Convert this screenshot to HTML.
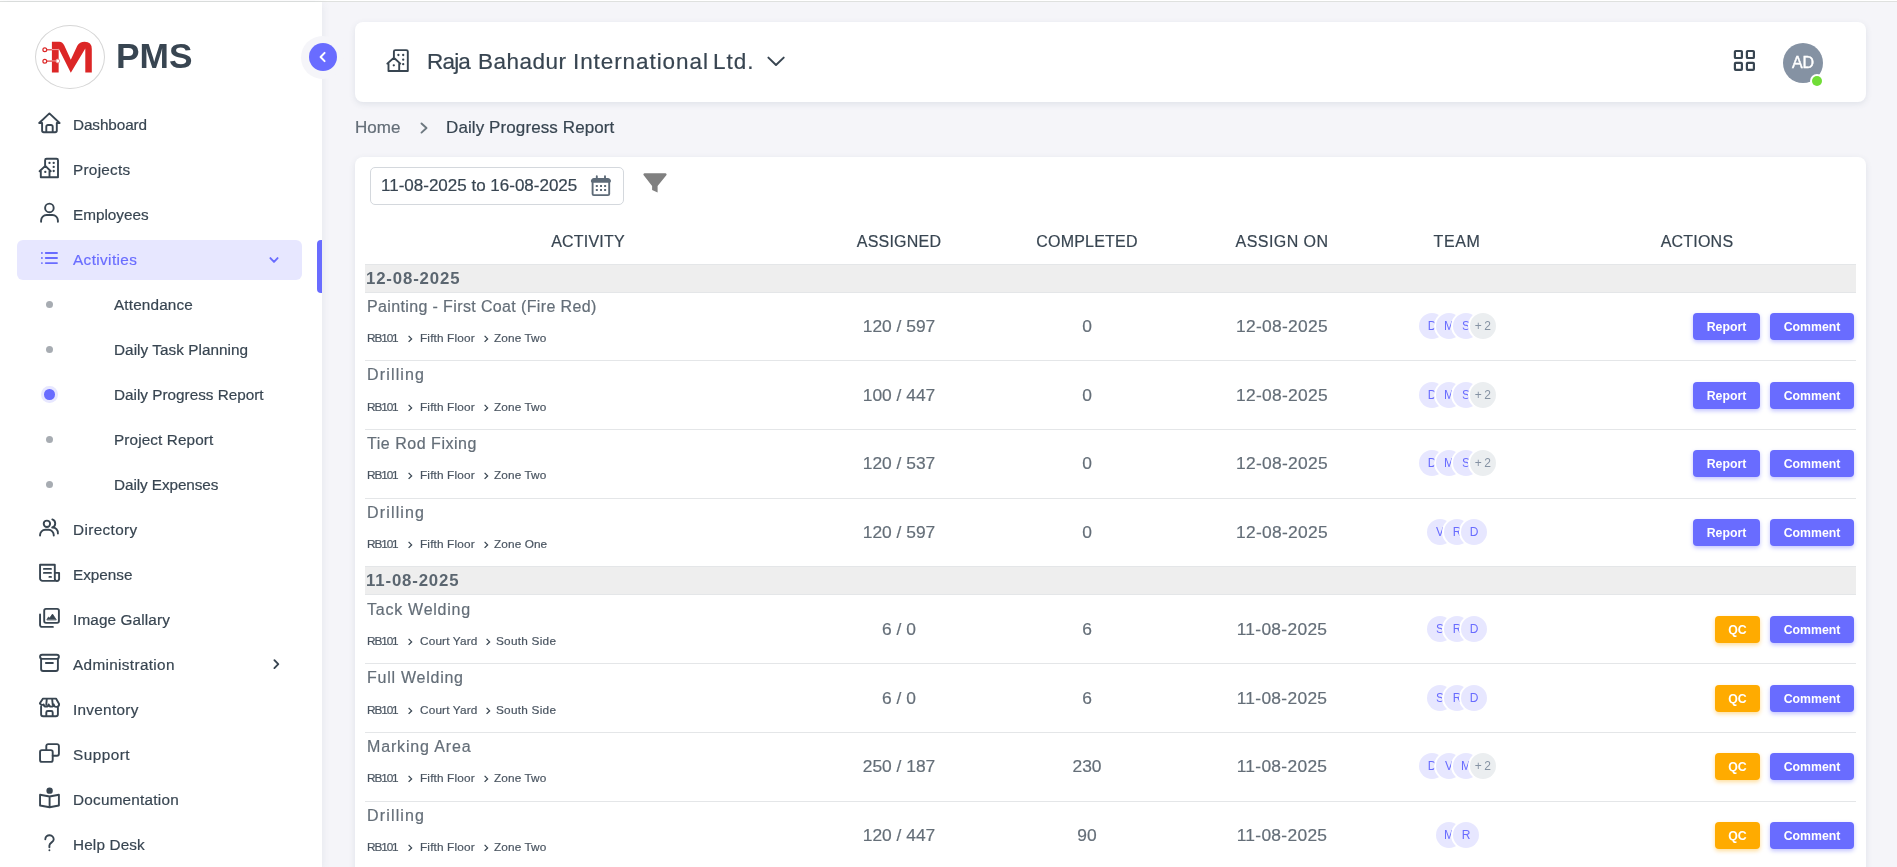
<!DOCTYPE html>
<html><head><meta charset="utf-8">
<style>
*{box-sizing:border-box;margin:0;padding:0}
html,body{width:1897px;height:867px;overflow:hidden}
body{font-family:"Liberation Sans",sans-serif;background:#f5f5f9;position:relative;color:#384551}
.abs{position:absolute}
.t{position:absolute;white-space:nowrap;will-change:transform;-webkit-text-stroke:0.2px currentColor}
#topline{left:0;top:1px;width:1897px;height:1px;background:#dfe1df}
#side{left:0;top:2px;width:322px;height:865px;background:#fff;box-shadow:0 2px 8px 0 rgba(67,89,113,.1)}
.logo{left:35px;top:25px;width:70px;height:64px;border:1px solid #d6d6d6;border-radius:50%;background:#fff}
.pms{left:116px;top:35.5px;font-size:35.3px;line-height:40px;font-weight:700;color:#384551;will-change:transform}
.toggle{left:301px;top:36px;width:43px;height:43px;border-radius:50%;background:#f5f5f9}
.toggle .in{position:absolute;left:8px;top:7px;width:28px;height:28px;border-radius:50%;background:#696cff}
#act{left:17px;top:240px;width:285px;height:40px;background:#e7e7ff;border-radius:6px}
#actbar{left:317px;top:240px;width:5px;height:53px;background:#696cff;border-radius:4px 0 0 4px}
.dot{position:absolute;left:46px;width:7px;height:7px;border-radius:50%;background:#a7acb2}
.card{background:#fff;border-radius:8px;box-shadow:0 2px 6px 0 rgba(67,89,113,.12)}
#hdr{left:355px;top:22px;width:1511px;height:80px}
#main{left:355px;top:157px;width:1511px;height:730px}
.ico{position:absolute;overflow:visible}
.datebox{left:370px;top:167px;width:254px;height:38px;border:1px solid #d4d8dd;border-radius:5px}
.avatar{left:1783px;top:43px;width:40px;height:40px;border-radius:50%;background:#8592a3}
.online{left:1812px;top:76px;width:10px;height:10px;border-radius:50%;background:#71dd37;box-shadow:0 0 0 2px #fff}
.hline{position:absolute;left:365px;width:1491px;height:1px;background:#e4e6e8}
.grp{position:absolute;left:365px;width:1491px;background:#eeeeee;border-top:1px solid #e4e6e8;border-bottom:1px solid #e4e6e8}
.rb{position:absolute;left:365px;width:1491px;height:1px;background:#e4e6e8}
.sub{color:#4a5561}
.chv{display:inline-block;margin:0 7px 0 8px;vertical-align:0px}
.team{position:absolute;height:26px}
.av{position:absolute;top:0;width:26px;height:26px;border-radius:50%;background:#e7e7ff;box-shadow:0 0 0 2px #fff;color:#696cff;font-size:12px;line-height:27.5px;text-align:center;will-change:transform}
.av.more{background:#ebeef0;color:#8592a3;letter-spacing:2.5px;text-indent:2px}
.btn{position:absolute;height:27px;border-radius:4px;color:#fff;font-size:12.3px;font-weight:700;line-height:29px;text-align:center;will-change:transform}
.bp{background:#696cff;box-shadow:0 2px 4px rgba(105,108,255,.4)}
.bw{background:#ffab00;box-shadow:0 2px 4px rgba(255,171,0,.4)}

</style></head><body>
<div class="abs" style="left:0;top:0;width:1897px;height:1px;background:#fff"></div>
<div id="topline" class="abs"></div>
<div id="side" class="abs"></div>
<div class="abs logo"></div>
<svg class="ico" style="left:35px;top:25px" width="70" height="64" viewBox="0 0 70 64">
<path d="M16.9 47.6 V16.8 H24.4 Q27.6 16.8 29.3 20.6 L35.8 34.7 L42.3 20.7 Q44.6 16.8 49.6 16.8 Q56.8 16.8 56.8 24 V47.6 H50.3 V23.6 L35.8 47.8 L23.65 23.4 V47.6 Z" fill="#dc2626"/>
<path d="M11.6 24.8 H16.9" stroke="#dc2626" stroke-width="1.1"/>
<path d="M16.9 24.6 H23.6" stroke="#f4b4b4" stroke-width="0.9"/>
<path d="M11.6 36.1 H16.9" stroke="#dc2626" stroke-width="1.1"/>
<path d="M16.9 35.9 H21" stroke="#f4b4b4" stroke-width="0.9"/>
<circle cx="9.8" cy="24.8" r="1.9" fill="#fff" stroke="#dc2626" stroke-width="1.2"/>
<circle cx="9.8" cy="36.2" r="1.9" fill="#fff" stroke="#dc2626" stroke-width="1.2"/>
<circle cx="22.8" cy="36" r="1.9" fill="#fff" stroke="#e98a8a" stroke-width="0.9"/>
</svg>
<div class="abs pms">PMS</div>
<div class="abs toggle"><div class="in"></div></div>
<svg class="ico" style="left:317px;top:51px" width="12" height="12" viewBox="0 0 12 12"><path d="M7.6 1.9 L3.6 6 L7.6 10.1" fill="none" stroke="#fff" stroke-width="2" stroke-linecap="round" stroke-linejoin="round"/></svg>
<div id="act" class="abs"></div>
<div id="actbar" class="abs"></div>
<div class="dot" style="top:301px"></div>
<div class="dot" style="top:346px"></div>
<div class="dot" style="background:#696cff;box-shadow:0 0 0 3px #e7e7ff;width:10.5px;height:10.5px;left:44.15px;top:389.15px"></div>
<div class="dot" style="top:436px"></div>
<div class="dot" style="top:481px"></div>
<div id="hdr" class="abs card"></div>
<div id="main" class="abs card"></div>
<div class="abs datebox"></div>
<div class="abs avatar"></div>
<div class="abs online"></div>
<div class="hline" style="top:264px"></div>
<svg class="ico" style="left:34px;top:108px" width="32" height="30" viewBox="0 0 32 30" fill="none" stroke="#384551" stroke-width="1.9" stroke-linecap="round" stroke-linejoin="round"><path d="M8.1 15 H5.2 L15.4 5.4 L25.6 15 H22.8 M8.1 15 V22.5 a1.7 1.7 0 0 0 1.7 1.7 H21.1 a1.7 1.7 0 0 0 1.7 -1.7 V15 M12.3 24.2 V18.7 a1.7 1.7 0 0 1 1.7 -1.7 H17 a1.7 1.7 0 0 1 1.7 1.7 V24.2"/></svg>
<svg class="ico" style="left:34px;top:152px" width="32" height="32" viewBox="0 0 32 32" fill="none" stroke="#384551" stroke-width="1.9" stroke-linecap="round" stroke-linejoin="round"><path d="M11.1 13.7 V8.3 a1.5 1.5 0 0 1 1.5 -1.5 H22.5 a1.5 1.5 0 0 1 1.5 1.5 V25.3 H6.8 V19.2 H5.6 L11.3 13.9 L16.8 19.2 H15.5 V25.3"/><path d="M15.5 10.9 h.01 M19.7 10.9 h.01 M19.7 14.9 h.01 M19.7 19 h.01 M11.3 19.9 h.01" stroke-width="2.3"/></svg>
<svg class="ico" style="left:34px;top:198px" width="32" height="30" viewBox="0 0 32 30" fill="none" stroke="#384551" stroke-width="1.9" stroke-linecap="round" stroke-linejoin="round"><circle cx="15.4" cy="9.9" r="4.3"/><path d="M7.1 23.7 v-1.2 a5.5 5.5 0 0 1 5.5 -5.5 h5.8 a5.5 5.5 0 0 1 5.5 5.5 v1.2"/></svg>
<svg class="ico" style="left:34px;top:245px" width="30" height="30" viewBox="0 0 30 30" fill="none" stroke="#696cff" stroke-width="1.9" stroke-linecap="round"><path d="M7.9 8 h.01 M7.9 13 h.01 M7.9 18.1 h.01 M11.8 8 H23 M11.8 13 H23 M11.8 18.1 H23"/></svg>
<svg class="ico" style="left:34px;top:512px" width="32" height="30" viewBox="0 0 32 30" fill="none" stroke="#384551" stroke-width="1.9" stroke-linecap="round" stroke-linejoin="round"><circle cx="12.9" cy="11.8" r="3.2"/><path d="M6.05 23.5 v-0.5 a5.2 5.2 0 0 1 5.2 -5.2 h3.3 a5.2 5.2 0 0 1 5.2 5.2 v0.5 M18.3 7.4 a4.2 4.2 0 0 1 0 8 M18.2 15.5 a5.3 5.3 0 0 1 5.7 6"/></svg>
<svg class="ico" style="left:34px;top:557px" width="32" height="30" viewBox="0 0 32 30" fill="none" stroke="#384551" stroke-width="1.9" stroke-linecap="round" stroke-linejoin="round"><path d="M20.8 15.9 H25.1 V21.8 a2.1 2.1 0 0 1 -4.3 0 V7.8 H6.05 V21.4 a2.5 2.5 0 0 0 2.5 2.5 H23 M9.9 11.9 H17 M9.9 15.9 H17 M15.4 19.9 H17"/></svg>
<svg class="ico" style="left:34px;top:602px" width="32" height="30" viewBox="0 0 32 30" fill="none" stroke="#384551" stroke-width="1.9" stroke-linecap="round" stroke-linejoin="round"><rect x="10.2" y="6.9" width="14.7" height="14" rx="1.8"/><path d="M6.05 12.5 V23 a1.9 1.9 0 0 0 1.9 1.9 H18.9"/><path d="M13 17.6 L14.5 15 L15.7 16.1 L18.5 12.1 L22.1 17.6 Z" fill="#384551" stroke-width="0.8"/></svg>
<svg class="ico" style="left:34px;top:648px" width="32" height="30" viewBox="0 0 32 30" fill="none" stroke="#384551" stroke-width="1.9" stroke-linecap="round" stroke-linejoin="round"><rect x="6.05" y="6.7" width="18.85" height="4.2" rx="2.1"/><path d="M7.1 10.9 V21 a2 2 0 0 0 2 2 H21.9 a2 2 0 0 0 2 -2 V10.9 M11.9 15.05 H18.9"/></svg>
<svg class="ico" style="left:34px;top:692px" width="32" height="30" viewBox="0 0 32 30" fill="none" stroke="#384551" stroke-width="1.9" stroke-linecap="round" stroke-linejoin="round"><path d="M9 6.6 H22 L25.1 11.9 a2.6 2.6 0 0 1 -5.3 0.6 a2.6 2.6 0 0 1 -5.1 0 a2.6 2.6 0 0 1 -5.1 0 a2.6 2.6 0 0 1 -3.7 -1.2 Z M12.8 6.6 L12.3 12.5 M18.1 6.6 L18.7 12.5 M7.1 14.5 V22.2 a2 2 0 0 0 2 2 H21.9 a2 2 0 0 0 2 -2 V14.5 M12.3 24.2 V20.5 a1.5 1.5 0 0 1 1.5 -1.5 H17.2 a1.5 1.5 0 0 1 1.5 1.5 V24.2"/></svg>
<svg class="ico" style="left:34px;top:737px" width="32" height="30" viewBox="0 0 32 30" fill="none" stroke="#384551" stroke-width="1.9" stroke-linecap="round" stroke-linejoin="round"><path d="M12.3 13.1 V9 a1.9 1.9 0 0 1 1.9 -1.9 H23 a1.9 1.9 0 0 1 1.9 1.9 V16.8 a1.9 1.9 0 0 1 -1.9 1.9 H18.7"/><rect x="6.05" y="13.1" width="12.65" height="11.8" rx="1.9"/></svg>
<svg class="ico" style="left:34px;top:782px" width="32" height="30" viewBox="0 0 32 30" fill="none" stroke="#384551" stroke-width="1.9" stroke-linejoin="round"><circle cx="15.6" cy="8.65" r="3.2" fill="#384551" stroke="none"/><path d="M15.6 14.5 L6.05 12.8 V23.5 L15.6 25.3 L24.9 23.5 V12.8 Z M15.6 14.5 V25.3"/></svg>
<svg class="ico" style="left:34px;top:828px" width="32" height="30" viewBox="0 0 32 30" fill="none" stroke="#384551" stroke-width="1.9" stroke-linecap="round" stroke-linejoin="round"><path d="M11.3 11.2 a4.2 4.2 0 0 1 8.4 0.4 c0 2.6 -4.3 3 -4.3 5.8 V19.3 M15.4 22.3 h.01"/></svg>
<svg class="ico" style="left:260px;top:245px" width="30" height="30" viewBox="0 0 30 30" fill="none" stroke="#696cff" stroke-width="1.9" stroke-linecap="round" stroke-linejoin="round"><path d="M10.4 13.1 L14 16.9 L17.6 13.1"/></svg>
<svg class="ico" style="left:260px;top:650px" width="30" height="30" viewBox="0 0 30 30" fill="none" stroke="#384551" stroke-width="1.9" stroke-linecap="round" stroke-linejoin="round"><path d="M14.4 10.2 L18.3 14.2 L14.4 18.1"/></svg>
<!-- header -->
<svg class="ico" style="left:380px;top:44px" width="36" height="34" viewBox="0 0 36 34" fill="none" stroke="#384551" stroke-width="1.9" stroke-linecap="round" stroke-linejoin="round"><path d="M13.9 14 V7.6 a1.5 1.5 0 0 1 1.5 -1.5 H26.3 a1.5 1.5 0 0 1 1.5 1.5 V27 H8.5 V19.6 H7.3 L13.9 13.8 L20.3 19.6 H19.2 V27"/><path d="M18.4 11 h.01 M23.2 11 h.01 M23.2 15.7 h.01 M23.2 20.2 h.01 M13.8 21.3 h.01" stroke-width="2.3"/></svg>
<svg class="ico" style="left:760px;top:50px" width="30" height="22" viewBox="0 0 30 22" fill="none" stroke="#384551" stroke-width="2" stroke-linecap="round" stroke-linejoin="round"><path d="M8.4 7.6 L16 15 L23.7 7.6"/></svg>
<svg class="ico" style="left:1730px;top:46px" width="30" height="30" viewBox="0 0 30 30" fill="none" stroke="#384551" stroke-width="2.2" stroke-linejoin="round"><rect x="4.9" y="5" width="7" height="7" rx="0.8"/><rect x="16.9" y="5" width="7" height="7" rx="0.8"/><rect x="4.9" y="16.9" width="7" height="7" rx="0.8"/><rect x="16.9" y="16.9" width="7" height="7" rx="0.8"/></svg>
<svg class="ico" style="left:414px;top:118px" width="20" height="20" viewBox="0 0 20 20" fill="none" stroke="#6d7880" stroke-width="1.9" stroke-linecap="round" stroke-linejoin="round"><path d="M7.5 5.5 L12.5 10 L7.5 14.6"/></svg>
<!-- date icon & filter -->
<svg class="ico" style="left:585px;top:170px" width="35" height="30" viewBox="0 0 35 30" fill="none" stroke="#5e6b78" stroke-width="1.9" stroke-linecap="round" stroke-linejoin="round"><rect x="7.6" y="9" width="16.6" height="16.1" rx="1.2"/><path d="M7.6 10.9 H24.2" stroke-width="3.6"/><path d="M11.8 6.3 V8.5 M20 6.3 V8.5"/><path d="M11.8 16 h.01 M16 16 h.01 M20.1 16 h.01 M11.8 20 h.01 M16 20 h.01 M20.1 20 h.01" stroke-width="2" stroke-linecap="square"/></svg>
<svg class="ico" style="left:636px;top:165px" width="40" height="40" viewBox="0 0 40 40"><path d="M8.6 8.3 H29.4 a1.2 1.2 0 0 1 0.9 2 L21.6 20.9 V27.6 L16.1 25.1 V20.9 L7.7 10.3 a1.2 1.2 0 0 1 0.9 -2 Z" fill="#808080"/></svg>
<div class="t" style="left:73px;top:115.52px;font-size:15.3px;line-height:18.36px;color:#384551;letter-spacing:-0.1px;">Dashboard</div>
<div class="t" style="left:73px;top:160.52px;font-size:15.3px;line-height:18.36px;color:#384551;letter-spacing:0.28px;">Projects</div>
<div class="t" style="left:73px;top:205.52px;font-size:15.3px;line-height:18.36px;color:#384551;">Employees</div>
<div class="t" style="left:73px;top:250.52px;font-size:15.3px;line-height:18.36px;color:#696cff;letter-spacing:0.39px;">Activities</div>
<div class="t" style="left:114px;top:295.52px;font-size:15.3px;line-height:18.36px;color:#384551;letter-spacing:0.15px;">Attendance</div>
<div class="t" style="left:114px;top:340.52px;font-size:15.3px;line-height:18.36px;color:#384551;letter-spacing:0.05px;">Daily Task Planning</div>
<div class="t" style="left:114px;top:385.52px;font-size:15.3px;line-height:18.36px;color:#384551;">Daily Progress Report</div>
<div class="t" style="left:114px;top:430.52px;font-size:15.3px;line-height:18.36px;color:#384551;letter-spacing:0.11px;">Project Report</div>
<div class="t" style="left:114px;top:475.52px;font-size:15.3px;line-height:18.36px;color:#384551;letter-spacing:-0.08px;">Daily Expenses</div>
<div class="t" style="left:73px;top:520.52px;font-size:15.3px;line-height:18.36px;color:#384551;letter-spacing:0.37px;">Directory</div>
<div class="t" style="left:73px;top:565.52px;font-size:15.3px;line-height:18.36px;color:#384551;">Expense</div>
<div class="t" style="left:73px;top:610.52px;font-size:15.3px;line-height:18.36px;color:#384551;letter-spacing:0.13px;">Image Gallary</div>
<div class="t" style="left:73px;top:655.52px;font-size:15.3px;line-height:18.36px;color:#384551;letter-spacing:0.35px;">Administration</div>
<div class="t" style="left:73px;top:701.02px;font-size:15.3px;line-height:18.36px;color:#384551;letter-spacing:0.3px;">Inventory</div>
<div class="t" style="left:73px;top:746.02px;font-size:15.3px;line-height:18.36px;color:#384551;letter-spacing:0.5px;">Support</div>
<div class="t" style="left:73px;top:791.02px;font-size:15.3px;line-height:18.36px;color:#384551;letter-spacing:0.23px;">Documentation</div>
<div class="t" style="left:73px;top:836.02px;font-size:15.3px;line-height:18.36px;color:#384551;letter-spacing:0.15px;">Help Desk</div>
<div class="t" style="left:427.2px;top:47.50px;font-size:22.5px;line-height:27.0px;color:#384551;letter-spacing:-0.8px;">Raja</div>
<div class="t" style="left:478.3px;top:47.50px;font-size:22.5px;line-height:27.0px;color:#384551;letter-spacing:0.48px;">Bahadur</div>
<div class="t" style="left:572.6px;top:47.50px;font-size:22.5px;line-height:27.0px;color:#384551;letter-spacing:0.92px;">International</div>
<div class="t" style="left:712.9px;top:47.50px;font-size:22.5px;line-height:27.0px;color:#384551;letter-spacing:0.98px;">Ltd.</div>
<div class="t" style="left:355px;top:117.91px;font-size:17px;line-height:20.4px;color:#646e78;">Home</div>
<div class="t" style="left:446px;top:117.91px;font-size:17px;line-height:20.4px;color:#384551;letter-spacing:0.1px;">Daily Progress Report</div>
<div class="t" style="left:380.5px;top:175.91px;font-size:17px;line-height:20.4px;color:#384551;">11-08-2025 to 16-08-2025</div>
<div class="t" style="left:1783.0px;width:40px;text-align:center;top:53.36px;font-size:16px;line-height:19.2px;color:#fff;-webkit-text-stroke:0.4px #fff;">AD</div>
<div class="t" style="left:488.0px;width:200px;text-align:center;top:231.66px;font-size:16px;line-height:19.2px;color:#384551;letter-spacing:0.2px;">ACTIVITY</div>
<div class="t" style="left:798.5px;width:200px;text-align:center;top:231.66px;font-size:16px;line-height:19.2px;color:#384551;letter-spacing:0.2px;">ASSIGNED</div>
<div class="t" style="left:987.0px;width:200px;text-align:center;top:231.66px;font-size:16px;line-height:19.2px;color:#384551;letter-spacing:0.2px;">COMPLETED</div>
<div class="t" style="left:1182.0px;width:200px;text-align:center;top:231.66px;font-size:16px;line-height:19.2px;color:#384551;letter-spacing:0.45px;">ASSIGN ON</div>
<div class="t" style="left:1357.0px;width:200px;text-align:center;top:231.66px;font-size:16px;line-height:19.2px;color:#384551;letter-spacing:0.6px;">TEAM</div>
<div class="t" style="left:1597.0px;width:200px;text-align:center;top:231.66px;font-size:16px;line-height:19.2px;color:#384551;letter-spacing:0.2px;">ACTIONS</div>
<div class="grp" style="top:264px;height:29px"></div>
<div class="t" style="left:366.3px;top:269.10px;font-size:16.8px;line-height:20.16px;color:#5b6670;font-weight:700;letter-spacing:0.85px;-webkit-text-stroke:0;">12-08-2025</div>
<div class="rb" style="top:360px"></div>
<div class="t" style="left:367px;top:296.86px;font-size:16px;line-height:19.2px;color:#646e78;letter-spacing:0.37px;">Painting - First Coat (Fire Red)</div>
<div class="t" style="left:366.5px;top:330.83px;font-size:11.8px;line-height:14.16px;color:#4a5561;letter-spacing:-1.1px;">RB101</div>
<svg class="ico" style="left:406.5px;top:334.0px" width="8" height="8" viewBox="0 0 8 8"><path d="M1.6 1.9 L4.6 4.9 L1.6 7.9" fill="none" stroke="#384551" stroke-width="1.3"/></svg>
<div class="t" style="left:420.2px;top:330.83px;font-size:11.8px;line-height:14.16px;color:#4a5561;letter-spacing:0.15px;">Fifth Floor</div>
<svg class="ico" style="left:483.3px;top:334.0px" width="8" height="8" viewBox="0 0 8 8"><path d="M1.6 1.9 L4.6 4.9 L1.6 7.9" fill="none" stroke="#384551" stroke-width="1.3"/></svg>
<div class="t" style="left:494.3px;top:330.83px;font-size:11.8px;line-height:14.16px;color:#4a5561;letter-spacing:0.1px;">Zone Two</div>
<div class="t" style="left:818.5px;width:160px;text-align:center;top:315.53px;font-size:17.4px;line-height:20.88px;color:#646e78;">120 / 597</div>
<div class="t" style="left:1007.0px;width:160px;text-align:center;top:315.53px;font-size:17.4px;line-height:20.88px;color:#646e78;">0</div>
<div class="t" style="left:1202.0px;width:160px;text-align:center;top:315.53px;font-size:17.4px;line-height:20.88px;color:#646e78;letter-spacing:0.3px;">12-08-2025</div>
<div class="team" style="left:1418.5px;top:312.83px"><div class="av" style="left:0px;z-index:1"><span>D</span></div><div class="av" style="left:17px;z-index:2"><span>M</span></div><div class="av" style="left:34px;z-index:3"><span>S</span></div><div class="av more" style="left:51px;z-index:4"><span>+2</span></div></div>
<div class="btn bp" style="left:1693px;top:312.93px;width:67px">Report</div>
<div class="btn bp" style="left:1770px;top:312.93px;width:84px">Comment</div>
<div class="rb" style="top:429px"></div>
<div class="t" style="left:367px;top:364.86px;font-size:16px;line-height:19.2px;color:#646e78;letter-spacing:1.16px;">Drilling</div>
<div class="t" style="left:366.5px;top:399.83px;font-size:11.8px;line-height:14.16px;color:#4a5561;letter-spacing:-1.1px;">RB101</div>
<svg class="ico" style="left:406.5px;top:403.0px" width="8" height="8" viewBox="0 0 8 8"><path d="M1.6 1.9 L4.6 4.9 L1.6 7.9" fill="none" stroke="#384551" stroke-width="1.3"/></svg>
<div class="t" style="left:420.2px;top:399.83px;font-size:11.8px;line-height:14.16px;color:#4a5561;letter-spacing:0.15px;">Fifth Floor</div>
<svg class="ico" style="left:483.3px;top:403.0px" width="8" height="8" viewBox="0 0 8 8"><path d="M1.6 1.9 L4.6 4.9 L1.6 7.9" fill="none" stroke="#384551" stroke-width="1.3"/></svg>
<div class="t" style="left:494.3px;top:399.83px;font-size:11.8px;line-height:14.16px;color:#4a5561;letter-spacing:0.1px;">Zone Two</div>
<div class="t" style="left:818.5px;width:160px;text-align:center;top:384.53px;font-size:17.4px;line-height:20.88px;color:#646e78;">100 / 447</div>
<div class="t" style="left:1007.0px;width:160px;text-align:center;top:384.53px;font-size:17.4px;line-height:20.88px;color:#646e78;">0</div>
<div class="t" style="left:1202.0px;width:160px;text-align:center;top:384.53px;font-size:17.4px;line-height:20.88px;color:#646e78;letter-spacing:0.3px;">12-08-2025</div>
<div class="team" style="left:1418.5px;top:381.50px"><div class="av" style="left:0px;z-index:1"><span>D</span></div><div class="av" style="left:17px;z-index:2"><span>M</span></div><div class="av" style="left:34px;z-index:3"><span>S</span></div><div class="av more" style="left:51px;z-index:4"><span>+2</span></div></div>
<div class="btn bp" style="left:1693px;top:381.60px;width:67px">Report</div>
<div class="btn bp" style="left:1770px;top:381.60px;width:84px">Comment</div>
<div class="rb" style="top:498px"></div>
<div class="t" style="left:367px;top:433.86px;font-size:16px;line-height:19.2px;color:#646e78;letter-spacing:0.53px;">Tie Rod Fixing</div>
<div class="t" style="left:366.5px;top:467.83px;font-size:11.8px;line-height:14.16px;color:#4a5561;letter-spacing:-1.1px;">RB101</div>
<svg class="ico" style="left:406.5px;top:471.0px" width="8" height="8" viewBox="0 0 8 8"><path d="M1.6 1.9 L4.6 4.9 L1.6 7.9" fill="none" stroke="#384551" stroke-width="1.3"/></svg>
<div class="t" style="left:420.2px;top:467.83px;font-size:11.8px;line-height:14.16px;color:#4a5561;letter-spacing:0.15px;">Fifth Floor</div>
<svg class="ico" style="left:483.3px;top:471.0px" width="8" height="8" viewBox="0 0 8 8"><path d="M1.6 1.9 L4.6 4.9 L1.6 7.9" fill="none" stroke="#384551" stroke-width="1.3"/></svg>
<div class="t" style="left:494.3px;top:467.83px;font-size:11.8px;line-height:14.16px;color:#4a5561;letter-spacing:0.1px;">Zone Two</div>
<div class="t" style="left:818.5px;width:160px;text-align:center;top:452.53px;font-size:17.4px;line-height:20.88px;color:#646e78;">120 / 537</div>
<div class="t" style="left:1007.0px;width:160px;text-align:center;top:452.53px;font-size:17.4px;line-height:20.88px;color:#646e78;">0</div>
<div class="t" style="left:1202.0px;width:160px;text-align:center;top:452.53px;font-size:17.4px;line-height:20.88px;color:#646e78;letter-spacing:0.3px;">12-08-2025</div>
<div class="team" style="left:1418.5px;top:450.17px"><div class="av" style="left:0px;z-index:1"><span>D</span></div><div class="av" style="left:17px;z-index:2"><span>M</span></div><div class="av" style="left:34px;z-index:3"><span>S</span></div><div class="av more" style="left:51px;z-index:4"><span>+2</span></div></div>
<div class="btn bp" style="left:1693px;top:450.27px;width:67px">Report</div>
<div class="btn bp" style="left:1770px;top:450.27px;width:84px">Comment</div>
<div class="t" style="left:367px;top:502.86px;font-size:16px;line-height:19.2px;color:#646e78;letter-spacing:1.16px;">Drilling</div>
<div class="t" style="left:366.5px;top:536.83px;font-size:11.8px;line-height:14.16px;color:#4a5561;letter-spacing:-1.1px;">RB101</div>
<svg class="ico" style="left:406.5px;top:540.0px" width="8" height="8" viewBox="0 0 8 8"><path d="M1.6 1.9 L4.6 4.9 L1.6 7.9" fill="none" stroke="#384551" stroke-width="1.3"/></svg>
<div class="t" style="left:420.2px;top:536.83px;font-size:11.8px;line-height:14.16px;color:#4a5561;letter-spacing:0.15px;">Fifth Floor</div>
<svg class="ico" style="left:483.3px;top:540.0px" width="8" height="8" viewBox="0 0 8 8"><path d="M1.6 1.9 L4.6 4.9 L1.6 7.9" fill="none" stroke="#384551" stroke-width="1.3"/></svg>
<div class="t" style="left:494.3px;top:536.83px;font-size:11.8px;line-height:14.16px;color:#4a5561;letter-spacing:0.1px;">Zone One</div>
<div class="t" style="left:818.5px;width:160px;text-align:center;top:521.53px;font-size:17.4px;line-height:20.88px;color:#646e78;">120 / 597</div>
<div class="t" style="left:1007.0px;width:160px;text-align:center;top:521.53px;font-size:17.4px;line-height:20.88px;color:#646e78;">0</div>
<div class="t" style="left:1202.0px;width:160px;text-align:center;top:521.53px;font-size:17.4px;line-height:20.88px;color:#646e78;letter-spacing:0.3px;">12-08-2025</div>
<div class="team" style="left:1427.0px;top:518.83px"><div class="av" style="left:0px;z-index:1"><span>V</span></div><div class="av" style="left:17px;z-index:2"><span>R</span></div><div class="av" style="left:34px;z-index:3"><span>D</span></div></div>
<div class="btn bp" style="left:1693px;top:518.93px;width:67px">Report</div>
<div class="btn bp" style="left:1770px;top:518.93px;width:84px">Comment</div>
<div class="grp" style="top:566px;height:29px"></div>
<div class="t" style="left:366.3px;top:571.10px;font-size:16.8px;line-height:20.16px;color:#5b6670;font-weight:700;letter-spacing:0.85px;-webkit-text-stroke:0;">11-08-2025</div>
<div class="rb" style="top:663px"></div>
<div class="t" style="left:367px;top:599.86px;font-size:16px;line-height:19.2px;color:#646e78;letter-spacing:0.75px;">Tack Welding</div>
<div class="t" style="left:366.5px;top:633.83px;font-size:11.8px;line-height:14.16px;color:#4a5561;letter-spacing:-1.1px;">RB101</div>
<svg class="ico" style="left:406.5px;top:637.0px" width="8" height="8" viewBox="0 0 8 8"><path d="M1.6 1.9 L4.6 4.9 L1.6 7.9" fill="none" stroke="#384551" stroke-width="1.3"/></svg>
<div class="t" style="left:420.2px;top:633.83px;font-size:11.8px;line-height:14.16px;color:#4a5561;letter-spacing:0.15px;">Court Yard</div>
<svg class="ico" style="left:484.5px;top:637.0px" width="8" height="8" viewBox="0 0 8 8"><path d="M1.6 1.9 L4.6 4.9 L1.6 7.9" fill="none" stroke="#384551" stroke-width="1.3"/></svg>
<div class="t" style="left:495.5px;top:633.83px;font-size:11.8px;line-height:14.16px;color:#4a5561;letter-spacing:0.25px;">South Side</div>
<div class="t" style="left:818.5px;width:160px;text-align:center;top:618.53px;font-size:17.4px;line-height:20.88px;color:#646e78;">6 / 0</div>
<div class="t" style="left:1007.0px;width:160px;text-align:center;top:618.53px;font-size:17.4px;line-height:20.88px;color:#646e78;">6</div>
<div class="t" style="left:1202.0px;width:160px;text-align:center;top:618.53px;font-size:17.4px;line-height:20.88px;color:#646e78;letter-spacing:0.3px;">11-08-2025</div>
<div class="team" style="left:1427.0px;top:615.83px"><div class="av" style="left:0px;z-index:1"><span>S</span></div><div class="av" style="left:17px;z-index:2"><span>R</span></div><div class="av" style="left:34px;z-index:3"><span>D</span></div></div>
<div class="btn bw" style="left:1715px;top:615.93px;width:45px">QC</div>
<div class="btn bp" style="left:1770px;top:615.93px;width:84px">Comment</div>
<div class="rb" style="top:732px"></div>
<div class="t" style="left:367px;top:667.86px;font-size:16px;line-height:19.2px;color:#646e78;letter-spacing:0.75px;">Full Welding</div>
<div class="t" style="left:366.5px;top:702.83px;font-size:11.8px;line-height:14.16px;color:#4a5561;letter-spacing:-1.1px;">RB101</div>
<svg class="ico" style="left:406.5px;top:706.0px" width="8" height="8" viewBox="0 0 8 8"><path d="M1.6 1.9 L4.6 4.9 L1.6 7.9" fill="none" stroke="#384551" stroke-width="1.3"/></svg>
<div class="t" style="left:420.2px;top:702.83px;font-size:11.8px;line-height:14.16px;color:#4a5561;letter-spacing:0.15px;">Court Yard</div>
<svg class="ico" style="left:484.5px;top:706.0px" width="8" height="8" viewBox="0 0 8 8"><path d="M1.6 1.9 L4.6 4.9 L1.6 7.9" fill="none" stroke="#384551" stroke-width="1.3"/></svg>
<div class="t" style="left:495.5px;top:702.83px;font-size:11.8px;line-height:14.16px;color:#4a5561;letter-spacing:0.25px;">South Side</div>
<div class="t" style="left:818.5px;width:160px;text-align:center;top:687.53px;font-size:17.4px;line-height:20.88px;color:#646e78;">6 / 0</div>
<div class="t" style="left:1007.0px;width:160px;text-align:center;top:687.53px;font-size:17.4px;line-height:20.88px;color:#646e78;">6</div>
<div class="t" style="left:1202.0px;width:160px;text-align:center;top:687.53px;font-size:17.4px;line-height:20.88px;color:#646e78;letter-spacing:0.3px;">11-08-2025</div>
<div class="team" style="left:1427.0px;top:684.50px"><div class="av" style="left:0px;z-index:1"><span>S</span></div><div class="av" style="left:17px;z-index:2"><span>R</span></div><div class="av" style="left:34px;z-index:3"><span>D</span></div></div>
<div class="btn bw" style="left:1715px;top:684.60px;width:45px">QC</div>
<div class="btn bp" style="left:1770px;top:684.60px;width:84px">Comment</div>
<div class="rb" style="top:801px"></div>
<div class="t" style="left:367px;top:736.86px;font-size:16px;line-height:19.2px;color:#646e78;letter-spacing:0.85px;">Marking Area</div>
<div class="t" style="left:366.5px;top:770.83px;font-size:11.8px;line-height:14.16px;color:#4a5561;letter-spacing:-1.1px;">RB101</div>
<svg class="ico" style="left:406.5px;top:774.0px" width="8" height="8" viewBox="0 0 8 8"><path d="M1.6 1.9 L4.6 4.9 L1.6 7.9" fill="none" stroke="#384551" stroke-width="1.3"/></svg>
<div class="t" style="left:420.2px;top:770.83px;font-size:11.8px;line-height:14.16px;color:#4a5561;letter-spacing:0.15px;">Fifth Floor</div>
<svg class="ico" style="left:483.3px;top:774.0px" width="8" height="8" viewBox="0 0 8 8"><path d="M1.6 1.9 L4.6 4.9 L1.6 7.9" fill="none" stroke="#384551" stroke-width="1.3"/></svg>
<div class="t" style="left:494.3px;top:770.83px;font-size:11.8px;line-height:14.16px;color:#4a5561;letter-spacing:0.1px;">Zone Two</div>
<div class="t" style="left:818.5px;width:160px;text-align:center;top:755.53px;font-size:17.4px;line-height:20.88px;color:#646e78;">250 / 187</div>
<div class="t" style="left:1007.0px;width:160px;text-align:center;top:755.53px;font-size:17.4px;line-height:20.88px;color:#646e78;">230</div>
<div class="t" style="left:1202.0px;width:160px;text-align:center;top:755.53px;font-size:17.4px;line-height:20.88px;color:#646e78;letter-spacing:0.3px;">11-08-2025</div>
<div class="team" style="left:1418.5px;top:753.17px"><div class="av" style="left:0px;z-index:1"><span>D</span></div><div class="av" style="left:17px;z-index:2"><span>V</span></div><div class="av" style="left:34px;z-index:3"><span>M</span></div><div class="av more" style="left:51px;z-index:4"><span>+2</span></div></div>
<div class="btn bw" style="left:1715px;top:753.27px;width:45px">QC</div>
<div class="btn bp" style="left:1770px;top:753.27px;width:84px">Comment</div>
<div class="t" style="left:367px;top:805.86px;font-size:16px;line-height:19.2px;color:#646e78;letter-spacing:1.16px;">Drilling</div>
<div class="t" style="left:366.5px;top:839.83px;font-size:11.8px;line-height:14.16px;color:#4a5561;letter-spacing:-1.1px;">RB101</div>
<svg class="ico" style="left:406.5px;top:843.0px" width="8" height="8" viewBox="0 0 8 8"><path d="M1.6 1.9 L4.6 4.9 L1.6 7.9" fill="none" stroke="#384551" stroke-width="1.3"/></svg>
<div class="t" style="left:420.2px;top:839.83px;font-size:11.8px;line-height:14.16px;color:#4a5561;letter-spacing:0.15px;">Fifth Floor</div>
<svg class="ico" style="left:483.3px;top:843.0px" width="8" height="8" viewBox="0 0 8 8"><path d="M1.6 1.9 L4.6 4.9 L1.6 7.9" fill="none" stroke="#384551" stroke-width="1.3"/></svg>
<div class="t" style="left:494.3px;top:839.83px;font-size:11.8px;line-height:14.16px;color:#4a5561;letter-spacing:0.1px;">Zone Two</div>
<div class="t" style="left:818.5px;width:160px;text-align:center;top:824.53px;font-size:17.4px;line-height:20.88px;color:#646e78;">120 / 447</div>
<div class="t" style="left:1007.0px;width:160px;text-align:center;top:824.53px;font-size:17.4px;line-height:20.88px;color:#646e78;">90</div>
<div class="t" style="left:1202.0px;width:160px;text-align:center;top:824.53px;font-size:17.4px;line-height:20.88px;color:#646e78;letter-spacing:0.3px;">11-08-2025</div>
<div class="team" style="left:1435.5px;top:821.83px"><div class="av" style="left:0px;z-index:1"><span>M</span></div><div class="av" style="left:17px;z-index:2"><span>R</span></div></div>
<div class="btn bw" style="left:1715px;top:821.93px;width:45px">QC</div>
<div class="btn bp" style="left:1770px;top:821.93px;width:84px">Comment</div>
</body></html>
